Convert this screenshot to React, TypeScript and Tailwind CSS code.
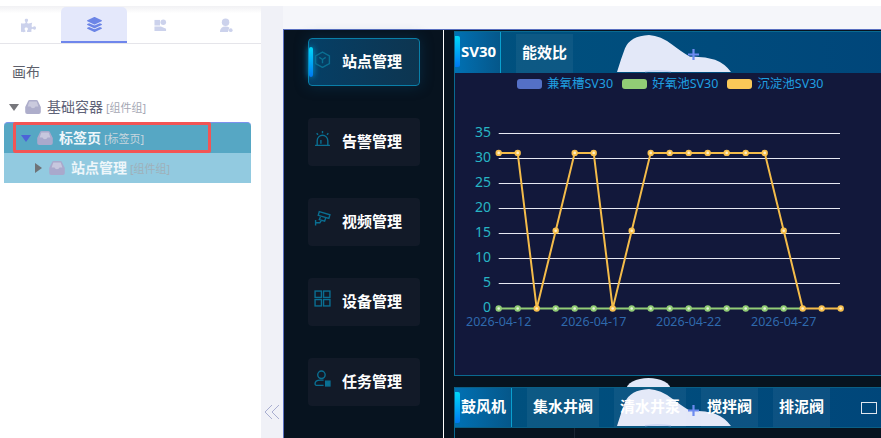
import { FaLayerGroup, FaPuzzlePiece } from 'react-icons/fa';

const FONT = "font-['Noto_Sans','Noto_Sans_CJK_SC',sans-serif]";

const orange = [31, 31, 0, 15.5, 31, 31, 0, 15.5, 31, 31, 31, 31, 31, 31, 31, 15.5, 0, 0, 0];
const green = orange.slice(0, 17).map(() => 0);
const px = (i: number) => 43.7 + 19 * i;
const py = (v: number) => 213.5 - v * 5.02;

function Tray({ className }: { className: string }) {
    return (
        <svg viewBox="0 0 16 14" className={className} fill="currentColor">
            <path d="M3 1.2Q3.4 0 4.6 0h6.8q1.2 0 1.6 1.2L15.8 7v5q0 2-2 2H2.200q-2 0-2-2V7z" />
            <path d="M2.600 6.500 4.300 1.600h7.400l1.700 4.900H10.500q-.5 1.700-2.500 1.700T5.500 6.500z" fill="#ffffff" fillOpacity="0.35" />
        </svg>
    );
}

function TreeRow({ label, tag, tagColor, bold, caret, tray }: { label: string; tag: string; tagColor: string; bold?: boolean; caret: React.ReactNode; tray: string }) {
    return (
        <div className="flex items-center">
            {caret}
            <Tray className={`h-[14px] w-[16px] ${tray}`} />
            <span className={`ml-[6px] text-[14px] leading-none ${bold ? 'font-bold text-[#eef6fa]' : 'text-[#5f6378]'}`}>{label}</span>
            <span className={`ml-[3px] text-[11px] leading-none ${tagColor}`}>{tag}</span>
        </div>
    );
}

function Sidebar() {
    return (
        <div className="w-[261px] shrink-0 bg-white">
            <div className="h-[6px]" />
            <div className="h-[38px] bg-gradient-to-b from-[#f1f1f4] to-white to-[20%] border-b border-[#e5e5ea]">
                <div className="flex h-full items-end">
                    <div className="flex h-[35px] w-[61px] items-center justify-center pr-[5px] text-[#ccd2ec]">
                        <FaPuzzlePiece size={15} />
                    </div>
                    <div className="flex h-[36px] w-[66px] items-center justify-center rounded-t-[5px] border-b-2 border-[#6f86ec] bg-[#e4e8fb] text-[#6c85e6]">
                        <FaLayerGroup size={15} />
                    </div>
                    <div className="flex h-[35px] w-[66px] items-center justify-center text-[#ccd2ec]">
                        <svg viewBox="0 0 14 14" className="h-[13px] w-[13px]" fill="currentColor">
                            <rect x="0.500" y="1" width="6" height="6" />
                            <circle cx="10" cy="3.500" r="3" />
                            <path d="M0.500 8h7l5.500 2.500V13H0.500z" />
                        </svg>
                    </div>
                    <div className="flex h-[35px] w-[66px] items-center justify-center text-[#ccd2ec]">
                        <svg viewBox="0 0 16 16" className="h-[15px] w-[15px]" fill="currentColor">
                            <circle cx="7" cy="4.500" r="4" />
                            <path d="M1 15q0-6 6-6 2.500 0 4 1.200L9.500 15z" />
                            <circle cx="12.500" cy="13" r="2" />
                        </svg>
                    </div>
                </div>
            </div>
            <div className="pl-[12px] pt-[19px] text-[14px] leading-[18px] text-[#5d5f6b]">画布</div>
            <div className="mt-[19px] pl-[9px]">
                <TreeRow
                    label="基础容器"
                    tag="[组件组]"
                    tagColor="text-[#a5a7b4]"
                    tray="text-[#aeaecb]"
                    caret={<span className="mr-[6px] h-0 w-0 border-x-[5px] border-t-[7px] border-x-transparent border-t-[#77777c]" />}
                />
            </div>
            <div className="mt-[8px] ml-[4px] w-[247px]">
                <div className="relative flex h-[31px] items-center rounded-t-[4px] border-t border-[#7b92ee] bg-[#56a7c4] pl-[17px]">
                    <TreeRow
                        label="标签页"
                        tag="[标签页]"
                        tagColor="text-[#c8d6de]"
                        bold
                        tray="text-[#a9a9cc]"
                        caret={<span className="mr-[6px] h-0 w-0 border-x-[5px] border-t-[7px] border-x-transparent border-t-[#4c63d8]" />}
                    />
                    <div className="absolute left-[9px] top-[-1px] h-[31px] w-[198px] rounded-[2px] border-[3px] border-[#f25555]" />
                </div>
                <div className="flex h-[30px] items-center bg-[#92cae0] pl-[31px]">
                    <TreeRow
                        label="站点管理"
                        tag="[组件组]"
                        tagColor="text-[#9fb0ba]"
                        bold
                        tray="text-[#a9a9cc]"
                        caret={<span className="mr-[7px] h-0 w-0 border-y-[5px] border-l-[7px] border-y-transparent border-l-[#6f7377]" />}
                    />
                </div>
            </div>
        </div>
    );
}

const navItems = [
    {
        label: '站点管理',
        active: true,
        icon: (
            <>
                <path d="M8 1 14.500 4.700v7.100L8 15.500 1.500 11.800V4.700z" />
                <path d="M5 6l3 2 3-2M8 8v3.500" />
            </>
        ),
    },
    {
        label: '告警管理',
        icon: (
            <>
                <path d="M1 14.500h14M3 14.500V10a5 5 0 0 1 10 0v4.500M6.500 13V9.500" />
                <path d="M8 1v2M2.500 3l1.300 1.500M13.500 3l-1.300 1.500" />
            </>
        ),
    },
    {
        label: '视频管理',
        icon: (
            <>
                <path d="M5 1.500 15 4.500 14 8 4 5z" />
                <path d="M6 6.500 5 9l5 1.500 1-3M7 9.500 5.500 12H2M1.500 9.500v5" />
            </>
        ),
    },
    {
        label: '设备管理',
        icon: (
            <>
                <rect x="1" y="1" width="6" height="6" />
                <rect x="9" y="1" width="6" height="6" />
                <rect x="1" y="9" width="6" height="6" />
                <rect x="9" y="9" width="6" height="6" />
            </>
        ),
    },
    {
        label: '任务管理',
        icon: (
            <>
                <circle cx="7" cy="4.500" r="3.500" />
                <path d="M9 14.500H3q-2 0-2-1.500 0-3.500 5-3.500h3" />
                <rect x="11" y="10.500" width="4" height="4.500" fill="currentColor" />
            </>
        ),
    },
];

function Nav() {
    return (
        <div className="flex w-[160px] shrink-0 flex-col gap-[32px] border-r border-white pl-[24px] pt-[8px]">
            {navItems.map((item) => (
                <div
                    key={item.label}
                    className={`relative flex h-[48px] w-[112px] items-center rounded-[4px] pb-[2px] ${
                        item.active
                            ? 'border border-[#0a7fa8] bg-gradient-to-r from-[#053f66] to-[#0d3550] shadow-[0_0_14px_rgba(8,70,110,0.45)]'
                            : 'bg-[#121a28]'
                    }`}
                >
                    {item.active && (
                        <span className="absolute left-0 top-[8px] h-[30px] w-[4px] rounded-[2px] bg-gradient-to-b from-[#00d8f8] to-[#0078f0] shadow-[0_0_6px_#00a8e8]" />
                    )}
                    <svg
                        viewBox="0 0 16 16"
                        className={`absolute top-[12px] h-[17px] w-[17px] text-[#0a6f92] ${item.active ? 'left-[5px]' : 'left-[6px]'}`}
                        fill="none"
                        stroke="currentColor"
                        strokeWidth="1.300"
                    >
                        {item.icon}
                    </svg>
                    <span className={`text-[15px] font-bold leading-none text-white ${item.active ? 'ml-[33px]' : 'ml-[34px]'}`}>{item.label}</span>
                </div>
            ))}
        </div>
    );
}

function Cloud() {
    return (
        <svg viewBox="0 0 114 40" preserveAspectRatio="none" className="absolute left-[162px] bottom-0 h-[38px] w-[114px] text-[#e3e8f8]">
            <path
                d="M0 39Q4 25 8 14 13 1 32 0 44 1 55 10 65 18 73 23 86 22 98 26 108 30 114 39Z"
                fill="currentColor"
            />
            <path d="M28 38.500q12-1.500 26 0" stroke="#c2ceef" strokeWidth="1.200" fill="none" />
        </svg>
    );
}

function Plus() {
    return (
        <span className="absolute left-[233px] top-[17px] z-20 text-[#6c8bf0]">
            <svg viewBox="0 0 10 10" className="h-[11px] w-[11px]" stroke="currentColor" strokeWidth="2">
                <path d="M5 0v10M0 5h10" />
            </svg>
        </span>
    );
}

function Tab({ label, active, w }: { label: string; active?: boolean; w: string }) {
    if (active) {
        return (
            <div className={`relative z-10 flex h-full ${w} shrink-0 items-center border-r border-[#0aa0cf] bg-gradient-to-r from-[#0071b4] to-[#05578a] pb-[2px] pl-[6px] text-[15px] font-bold leading-none text-white`}>
                <span className="absolute left-0 top-[4px] h-[31px] w-[5px] rounded-r-[2px] bg-gradient-to-b from-[#00d8f8] to-[#0078f0]" />
                <span className="relative">{label}</span>
            </div>
        );
    }
    return (
        <div className={`relative z-10 ml-[15px] flex h-[39px] ${w} shrink-0 items-center justify-center self-end bg-[#ffffff]/5 pb-[2px] text-[15px] font-bold leading-none text-white`}>
            {label}
        </div>
    );
}

function Chart() {
    const line = (vals: number[]) => vals.map((v, i) => `${px(i)},${py(v)}`).join(' ');
    return (
        <svg width="426" height="240" className="block">
            {[0, 5, 10, 15, 20, 25, 30, 35].map((v) => (
                <g key={v}>
                    {v > 0 && <line x1={43.7} x2={385} y1={Math.round(py(v)) + 0.5} y2={Math.round(py(v)) + 0.5} stroke="#e6e8f2" strokeWidth="1" />}
                    <text x={36} y={py(v) + 3.700} textAnchor="end" fontSize="14" fill="#27b5c4" fontFamily="Noto Sans">
                        {v}
                    </text>
                </g>
            ))}
            {['2026-04-12', '2026-04-17', '2026-04-22', '2026-04-27'].map((d, i) => (
                <text key={d} x={px(i * 5)} y={231} textAnchor="middle" fontSize="12.500" fill="#2f69ad" fontFamily="Noto Sans">
                    {d}
                </text>
            ))}
            <polyline points={line(orange)} fill="none" stroke="#f4bc4a" strokeWidth="2" />
            <polyline points={line(green)} fill="none" stroke="#92cc76" strokeWidth="2" />
            {green.map((v, i) =>
                i === 2 || i === 6 || i === 16 ? null : (
                    <g key={i}>
                        <circle cx={px(i)} cy={py(v)} r="3.200" fill="#92cc76" />
                        <circle cx={px(i)} cy={py(v)} r="1.300" fill="#e6f4dc" />
                    </g>
                )
            )}
            {orange.map((v, i) =>
                v === 0 && i !== 2 && i !== 6 && i < 16 ? null : (
                    <g key={i}>
                        <circle cx={px(i)} cy={py(v)} r="3.200" fill="#f8c04e" />
                        <circle cx={px(i)} cy={py(v)} r="1.300" fill="#fff0c8" />
                    </g>
                )
            )}
        </svg>
    );
}

const legend = [
    { label: '兼氧槽SV30', color: 'bg-[#5470c6]' },
    { label: '好氧池SV30', color: 'bg-[#91cc75]' },
    { label: '沉淀池SV30', color: 'bg-[#fac858]' },
];

function Panels() {
    return (
        <div className="min-w-0 flex-1 overflow-hidden pl-[10px] pt-[1px]">
            {/* SV30 */}
            <div className="h-[345px] w-[440px] border border-[#0a6a90] bg-[#12183b]">
                <div className="relative flex h-[41px] bg-gradient-to-r from-[#00527f] to-[#00467a]">
                    <Cloud />
                    <Plus />
                    <Tab label="SV30" active w="w-[46px]" />
                    <Tab label="能效比" w="w-[57px]" />
                </div>
                <div className="flex h-[22px] items-center gap-[9px] pl-[62px]">
                    {legend.map((l) => (
                        <div key={l.label} className="flex items-center gap-[5px]">
                            <span className={`h-[10px] w-[25px] rounded-[3px] ${l.color}`} />
                            <span className="text-[12.5px] leading-none text-[#1f9fe0]">{l.label}</span>
                        </div>
                    ))}
                </div>
                <Chart />
            </div>
            {/* valves */}
            <div className="relative mt-[11px] h-[60px] w-[440px] border-l border-[#0a6a90]">
                <span className="absolute left-[171px] top-[-9px] h-[12px] w-[45px] rounded-[50%_50%_0_0/100%_100%_0_0] bg-[#e3e8f8]" />
                <div className="relative flex h-[41px] border-y border-[#0a5f85] bg-gradient-to-r from-[#00527f] to-[#00467a]">
                    <Cloud />
                    <Plus />
                    <Tab label="鼓风机" active w="w-[57px]" />
                    <Tab label="集水井阀" w="w-[72px]" />
                    <Tab label="清水井泵" w="w-[72px]" />
                    <Tab label="搅拌阀" w="w-[57px]" />
                    <Tab label="排泥阀" w="w-[57px]" />
                    <span className="absolute left-[406px] top-[14px] h-[12px] w-[16px] border border-[#dfe6ee]" />
                </div>
                <div className="ml-[119px] h-[10px] w-px bg-[#1a2533]" />
            </div>
        </div>
    );
}

export default function App() {
    return (
        <div className={`flex h-[438px] w-[881px] overflow-hidden bg-white ${FONT}`}>
            <Sidebar />
            <div className="flex w-[22px] shrink-0 flex-col justify-end border-t-[6px] border-white bg-[#f0f1f7] pb-[19px] pl-[4px]">
                <svg viewBox="0 0 14 14" className="h-[14px] w-[14px] text-[#a9aed0]" fill="none" stroke="currentColor" strokeWidth="1">
                    <path d="M7 0 0 7l7 7M14 0 7 7l7 7" />
                </svg>
            </div>
            <div className="flex min-w-0 flex-1 flex-col">
                <div className="h-[6px] shrink-0 bg-white" />
                <div className="h-[23px] shrink-0 bg-[#f5f6fa]" />
                <div className="flex min-h-0 flex-1 border-l border-t border-[#5a70c0] bg-[#07131f]">
                    <Nav />
                    <Panels />
                </div>
            </div>
        </div>
    );
}
